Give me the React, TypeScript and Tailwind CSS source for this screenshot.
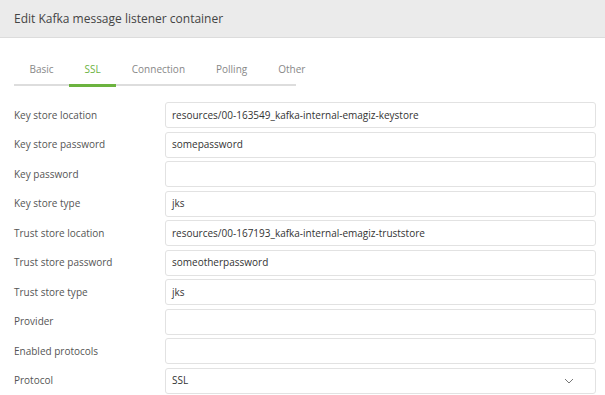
import React from "react";

const rows: { label: string; value: string; select?: boolean }[] = [
  { label: "Key store location", value: "resources/00-163549_kafka-internal-emagiz-keystore" },
  { label: "Key store password", value: "somepassword" },
  { label: "Key password", value: "" },
  { label: "Key store type", value: "jks" },
  { label: "Trust store location", value: "resources/00-167193_kafka-internal-emagiz-truststore" },
  { label: "Trust store password", value: "someotherpassword" },
  { label: "Trust store type", value: "jks" },
  { label: "Provider", value: "" },
  { label: "Enabled protocols", value: "" },
  { label: "Protocol", value: "SSL", select: true },
];

const tabs = ["Basic", "SSL", "Connection", "Polling", "Other"];

export default function App() {
  return (
    <div
      className="w-[605px] h-[395px] bg-white overflow-hidden"
      style={{ fontFamily: '"Open Sans", "Noto Sans", sans-serif' }}
    >
      <div className="h-[38px] bg-[#ebebeb] border-b border-[#dcdcdc] flex items-center px-[14px]">
        <span className="text-[12px] text-[#444]">Edit Kafka message listener container</span>
      </div>
      <div className="pl-[14px] pr-[9px]">
        <div className="relative mt-[20px] h-[28px]">
          <div className="absolute left-0 bottom-0 w-[282px] h-[2px] bg-[#dddddd]" />
          <div className="relative flex h-full">
            {tabs.map((t, i) => (
              <div
                key={t}
                className={
                  i === 1
                    ? "relative flex items-center pb-[6px] px-[15.5px] text-[10px] text-[#6cb33f]"
                    : "flex items-center pb-[6px] px-[15.5px] text-[10px] text-[#888]"
                }
              >
                {t}
                {i === 1 && <div className="absolute left-0 right-0 bottom-[-0.5px] h-[3px] bg-[#6cb33f]" />}
              </div>
            ))}
          </div>
        </div>
        <div className="mt-[16px] flex flex-col gap-[3.5px]">
          {rows.map((r) => (
            <div key={r.label} className="flex items-center h-[26px]">
              <div className="w-[151px] text-[10px] text-[#555]">{r.label}</div>
              <div className="flex-1 h-[26px] border border-[#e2e2e2] rounded-[3px] flex items-center pl-[6px] pr-[21px] text-[10px] text-[#333]">
                <span className="flex-1">{r.value}</span>
                {r.select && (
                  <svg width="10" height="6" viewBox="0 0 10 6" fill="none">
                    <path d="M1 1l4 4 4-4" stroke="#777" strokeWidth="1" />
                  </svg>
                )}
              </div>
            </div>
          ))}
        </div>
      </div>
    </div>
  );
}
